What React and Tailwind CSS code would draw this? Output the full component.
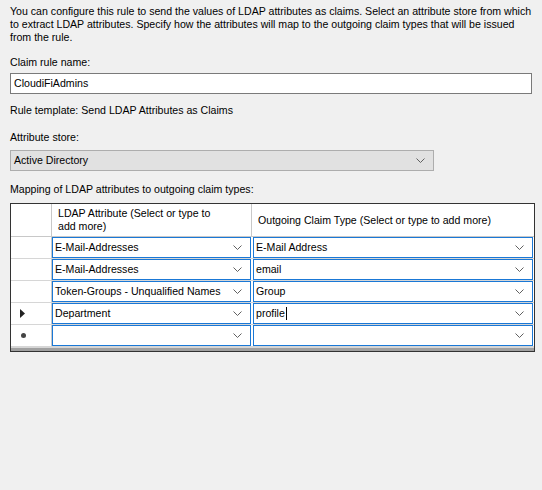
import React from 'react'

const Chevron = ({ className = '' }) => (
  <svg width="9" height="5" viewBox="0 0 9 5" className={className}>
    <path d="M0.5 0.5 L4.5 4.5 L8.5 0.5" fill="none" stroke="#606060" strokeWidth="1" />
  </svg>
)

const rows = [
  { marker: '', ldap: 'E-Mail-Addresses', claim: 'E-Mail Address' },
  { marker: '', ldap: 'E-Mail-Addresses', claim: 'email' },
  { marker: '', ldap: 'Token-Groups - Unqualified Names', claim: 'Group' },
  { marker: 'current', ldap: 'Department', claim: 'profile', caret: true },
  { marker: 'new', ldap: '', claim: '' },
]

const CellSelect = ({ value, caret }) => (
  <div className="flex h-full items-center justify-between border border-[#1a78d6] bg-white pl-[2px] pr-[8px]">
    <span className="flex items-center whitespace-nowrap text-black">
      {value}
      {caret && <span className="ml-[1px] inline-block h-[13px] w-px bg-black" />}
    </span>
    <Chevron />
  </div>
)

export default function App() {
  return (
    <div
      className="h-[490px] w-[542px] bg-[#f0f0f0] px-[10px] pt-[5px] text-[10.6px] leading-[13px] text-black"
      style={{ fontFamily: '"Liberation Sans", Arial, sans-serif' }}
    >
      <p className="whitespace-nowrap">
        You can configure this rule to send the values of LDAP attributes as claims. Select an attribute store from which
        <br />
        to extract LDAP attributes. Specify how the attributes will map to the outgoing claim types that will be issued
        <br />
        from the rule.
      </p>

      <div className="mt-[12px]">Claim rule name:</div>
      <div className="mt-[4px] flex h-[21px] w-[522px] items-center border border-[#7a7a7a] bg-white pl-[3px]">
        CloudiFiAdmins
      </div>

      <div className="mt-[10px]">Rule template: Send LDAP Attributes as Claims</div>

      <div className="mt-[14px]">Attribute store:</div>
      <div className="mt-[6px] flex h-[21px] w-[424px] items-center justify-between border border-[#adadad] bg-[#e1e1e1] pl-[3px] pr-[8px]">
        <span>Active Directory</span>
        <Chevron />
      </div>

      <div className="mt-[12px]">Mapping of LDAP attributes to outgoing claim types:</div>

      <div className="mt-[7px] w-[525px] border border-[#333] bg-white">
        <div className="grid grid-cols-[41px_200px_1fr] border-b border-[#c8c8c8]">
          <div className="h-[32px] border-r border-[#c8c8c8]" />
          <div className="flex items-center border-r border-[#c8c8c8] pl-[6px]">
            LDAP Attribute (Select or type to
            <br />
            add more)
          </div>
          <div className="flex items-center pl-[6px]">Outgoing Claim Type (Select or type to add more)</div>
        </div>
        {rows.map((r, i) => (
          <div key={i} className="grid h-[22px] grid-cols-[41px_200px_1fr] border-b border-[#d6d6d6] last:border-b-0">
            <div className="flex items-center border-r border-[#c8c8c8] pl-[9px]">
              {r.marker === 'current' && (
                <svg width="5" height="9" viewBox="0 0 5 9">
                  <path d="M0 0 L5 4.5 L0 9 Z" fill="#222" />
                </svg>
              )}
              {r.marker === 'new' && <span className="ml-[1px] inline-block h-[5px] w-[5px] rounded-full bg-[#444]" />}
            </div>
            <div className="pr-[1px]">
              <CellSelect value={r.ldap} />
            </div>
            <div className="pl-px pr-[1px]">
              <CellSelect value={r.claim} caret={r.caret} />
            </div>
          </div>
        ))}
        <div className="h-[4px] border-t border-[#d6d6d6] bg-[#a0a0a0]" />
      </div>
    </div>
  )
}
